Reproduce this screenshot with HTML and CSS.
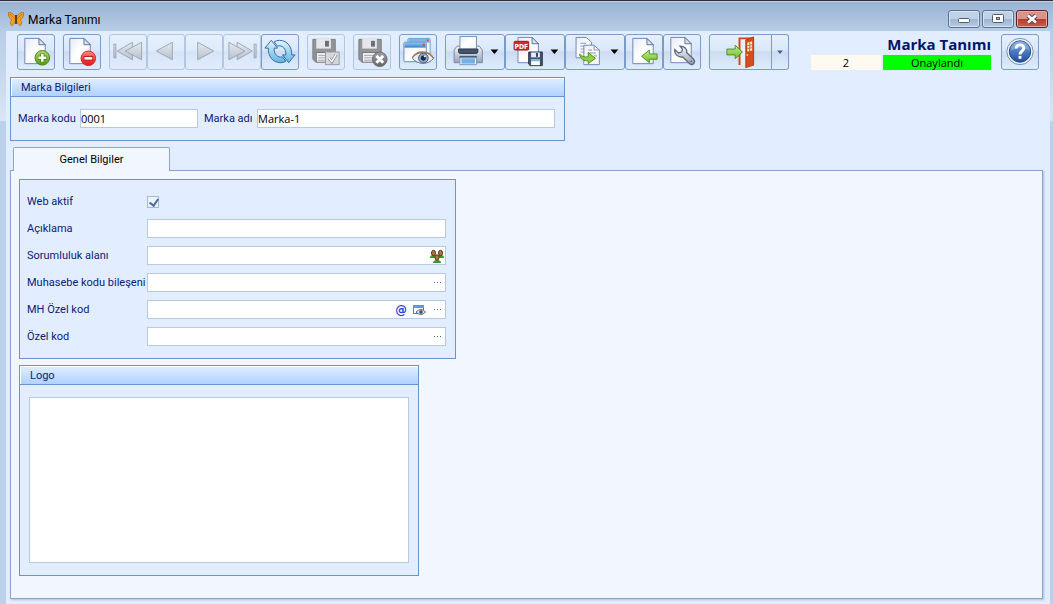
FILE: index.html
```html
<!DOCTYPE html>
<html lang="tr">
<head>
<meta charset="utf-8">
<title>Marka Tanımı</title>
<link rel="stylesheet" href="styles.css">
</head>
<body>
<svg class="defs" aria-hidden="true">
  <defs>
    <linearGradient id="gPaper" x1="0" y1="0" x2="1" y2="1"><stop offset="0" stop-color="#e6ebf7"/><stop offset=".5" stop-color="#fff"/><stop offset="1" stop-color="#eef1fa"/></linearGradient>
    <linearGradient id="gGreen" x1="0" y1="0" x2="0" y2="1"><stop offset="0" stop-color="#b5dc6a"/><stop offset="1" stop-color="#4f9a14"/></linearGradient>
    <linearGradient id="gArrow" x1="0" y1="0" x2="0" y2="1"><stop offset="0" stop-color="#c4ea8a"/><stop offset="1" stop-color="#6cc02c"/></linearGradient>
    <linearGradient id="gRed" x1="0" y1="0" x2="0" y2="1"><stop offset="0" stop-color="#ff8a80"/><stop offset="1" stop-color="#dc1414"/></linearGradient>
    <linearGradient id="gNav" x1="0" y1="0" x2="0" y2="1"><stop offset="0" stop-color="#e6eaf0"/><stop offset="1" stop-color="#b9c0cb"/></linearGradient>
    <linearGradient id="gCyan" x1="0" y1="0" x2="0" y2="1"><stop offset="0" stop-color="#e2f4fd"/><stop offset="1" stop-color="#63b3e2"/></linearGradient>
    <linearGradient id="gWin" x1="0" y1="0" x2="0" y2="1"><stop offset="0" stop-color="#8cc4f2"/><stop offset="1" stop-color="#3a82c8"/></linearGradient>
    <linearGradient id="gDark" x1="0" y1="0" x2="0" y2="1"><stop offset="0" stop-color="#9ea0a4"/><stop offset="1" stop-color="#626468"/></linearGradient>
    <linearGradient id="gSteel" x1="0" y1="0" x2="0" y2="1"><stop offset="0" stop-color="#f4f6fa"/><stop offset="1" stop-color="#98a2b6"/></linearGradient>
    <linearGradient id="gHelp" x1="0" y1="0" x2="0" y2="1"><stop offset="0" stop-color="#7ba6dc"/><stop offset="1" stop-color="#1f4f9c"/></linearGradient>
    <g id="page"><path d="M.5.5H15L21.5 7V26.500H.5Z" fill="url(#gPaper)" stroke="#6f84b4"/><path d="M15 .5V7H21.500Z" fill="#dbe3f3" stroke="#5a70a4"/></g>
    <g id="floppy"><path d="M.5 .5H23.500V23.500H3L.5 21Z" fill="#929498" stroke="#7a7c80"/><rect x="4" y="0" width="15" height="10" fill="#e4e7ec"/><rect x="13" y="2" width="4" height="6" fill="#6c6e72"/><rect x="4" y="14" width="16" height="10" fill="#eceef1" stroke="#74767a"/><path d="M6 17H18M6 19.500H18M6 22H18" stroke="#a6a8ac"/></g>
  </defs>
</svg>
<div class="window">
  <header class="titlebar">
    <svg class="app-icon" width="16" height="16" viewBox="0 0 16 16" aria-hidden="true"><path d="M7.500 6C5 2 2 1 .5 1.500 0 5 1.500 8 4 8.500 2 10 2 13 3.500 14.500 6 14 7 11 7.800 9 9 11 10 14 12.500 14.500 14 13 14 10 12 8.500 14.500 8 16 5 15.500 1.500 13 1 10 3 8.500 6Z" fill="#f5a31c" stroke="#a8560c" stroke-width=".6"/><path d="M1.500 2.500 7 8M14.500 2.500 9 8" fill="none" stroke="#c26d0e" stroke-width=".8"/><path d="M8 4V13" stroke="#3c2410" stroke-width="1.500"/></svg>
    <span class="caption">Marka Tanımı</span>
    <div class="winbtns">
      <button class="winbtn" aria-label="Simge durumuna küçült"><svg width="30" height="16" viewBox="0 0 30 16"><rect x="9.500" y="7.500" width="11" height="4" rx="1" fill="#fff" stroke="#525c6c"/></svg></button>
      <button class="winbtn" aria-label="Ekranı kapla"><svg width="30" height="16" viewBox="0 0 30 16"><rect x="9.500" y="3.500" width="11" height="8" rx="1" fill="#fff" stroke="#525c6c"/><rect x="13.500" y="6.500" width="3" height="2" fill="#a5bbd6" stroke="#525c6c"/></svg></button>
      <button class="winbtn close" aria-label="Kapat"><svg width="30" height="16" viewBox="0 0 30 16"><path d="M11 4.500 19 11.500M19 4.500 11 11.500" stroke="#4c4350" stroke-width="4.500"/><path d="M11 4.500 19 11.500M19 4.500 11 11.500" stroke="#fff" stroke-width="2.600"/></svg></button>
    </div>
  </header>
  <main class="client">
    <div class="topbar">
      <div class="toolbar">
        <button class="tool" aria-label="Yeni"><svg viewBox="0 0 36 35"><use href="#page" x="6" y="3"/><circle cx="24.500" cy="23.500" r="7.500" fill="url(#gGreen)" stroke="#4a8014"/><path d="M24.500 19V28M20 23.500H29" stroke="#4d851a" stroke-width="4.500"/><path d="M24.500 19.500V27.500M20.500 23.500H28.500" stroke="#fff" stroke-width="2.600"/></svg></button>
        <button class="tool" aria-label="Sil"><svg viewBox="0 0 36 35"><use href="#page" x="5" y="3"/><circle cx="24.500" cy="24" r="7.500" fill="url(#gRed)" stroke="#d22"/><path d="M19.500 24H29.500" stroke="#c22020" stroke-width="5"/><path d="M20.500 24H28.500" stroke="#fff" stroke-width="2.600"/></svg></button>
        <div class="cluster">
          <button class="tool dim" disabled aria-label="İlk kayıt"><svg viewBox="0 0 36 35"><g fill="url(#gNav)" stroke="#9ba5b4"><rect x="3.500" y="9.500" width="2" height="14"/><path d="M7 16.500 22.500 7.500V25.500Z"/><path d="M15 16.500 32 7.500V25.500Z"/></g></svg></button>
          <button class="tool dim" disabled aria-label="Önceki kayıt"><svg viewBox="0 0 36 35"><path d="M8 16.500 24.500 7.500V25.500Z" fill="url(#gNav)" stroke="#9ba5b4"/></svg></button>
          <button class="tool dim" disabled aria-label="Sonraki kayıt"><svg viewBox="0 0 36 35"><path d="M28 16.500 11.500 7.500V25.500Z" fill="url(#gNav)" stroke="#9ba5b4"/></svg></button>
          <button class="tool dim" disabled aria-label="Son kayıt"><svg viewBox="0 0 36 35"><g fill="url(#gNav)" stroke="#9ba5b4"><path d="M28.500 16.500 13 7.500V25.500Z"/><path d="M21 16.500 4.500 7.500V25.500Z"/><rect x="30.500" y="9.500" width="2" height="14"/></g></svg></button>
          <button class="tool" aria-label="Yenile"><svg viewBox="0 0 36 35"><g fill="url(#gCyan)" stroke="#2f6ca4" stroke-linejoin="round"><path d="M9 5.500 2.500 13.500H6C5.500 21 10 28.500 18.500 28.500 20.500 28.500 22.500 28 24 27L20.500 22.500C15.500 24 11.500 19.500 12 13.500H15.500Z"/><path d="M27 28.500 33.500 20.500H30C30.500 13 26 5.500 17.500 5.500 15.500 5.500 13.500 6 12 7L15.500 11.500C20.500 10 24.500 14.500 24 20.500H20.500Z"/></g></svg></button>
        </div>
        <button class="tool dim" disabled aria-label="Kaydet"><svg viewBox="0 0 36 35"><use href="#floppy" x="4" y="4"/><rect x="17.500" y="17.500" width="14" height="13" fill="#d4d7dc" stroke="#96999f"/><path d="M21 24 24 27.500 28.500 20" fill="none" stroke="#8a8e95" stroke-width="3"/><path d="M21 24 24 27.500 28.500 20" fill="none" stroke="#fff" stroke-width="1.400"/></svg></button>
        <button class="tool dim" disabled aria-label="Vazgeç"><svg viewBox="0 0 36 35"><use href="#floppy" x="4" y="4"/><circle cx="26" cy="25" r="7.500" fill="url(#gDark)" stroke="#6a6c70"/><path d="M22.500 21.500 29.500 28.500M29.500 21.500 22.500 28.500" stroke="#fff" stroke-width="3"/></svg></button>
        <button class="tool" aria-label="Önizleme"><svg viewBox="0 0 36 35"><rect x="7.500" y="3.500" width="23" height="19" rx="1" fill="#f2f6fd" stroke="#6f9bd0"/><path d="M8 4H30V8H8Z" fill="#7db6ea"/><rect x="27" y="4.500" width="2" height="2" fill="#f04030"/><rect x="3.500" y="7.500" width="23" height="20" rx="1" fill="url(#gPaper)" stroke="#5f88c4"/><path d="M4 8H26V13H4Z" fill="url(#gWin)"/><rect x="23" y="9" width="2" height="2" fill="#f04030"/><path d="M12 23.500C16 17 30 16 34 24 29 31 17 31 12 23.500Z" fill="#e9eef6" stroke="#6c6f7c"/><path d="M12.500 23C17 15.500 29 15.500 34 24" fill="none" stroke="#a37950" stroke-width="1.500"/><circle cx="23.500" cy="23.800" r="5" fill="#8ba6c8" stroke="#4c6186"/><circle cx="23.500" cy="23.800" r="2.600" fill="#1b2944"/><circle cx="25" cy="22" r="1" fill="#fff"/></svg></button>
        <div class="cluster">
          <button class="tool drop" aria-label="Yazdır"><svg viewBox="0 0 58 35"><path d="M7.500 15.500 10.500 11.500H33.500L36.500 15.500V28.500H7.500Z" fill="url(#gSteel)" stroke="#7c88a0"/><rect x="13.500" y="1.500" width="17" height="13" fill="url(#gPaper)" stroke="#7c8eb0"/><path d="M12 14.500H32V17Q32 19 30 19H14Q12 19 12 17Z" fill="#46536b" stroke="#2f3a50"/><path d="M13 22.500H31" stroke="#4c5a76" stroke-width="2"/><path d="M13.500 23.500H30.500V30.500H13.500Z" fill="#fff" stroke="#7e94bc"/><path d="M15 24H29V29.500H15Z" fill="#74b2e6"/><path d="M45 15H53L49 19.500Z"/></svg></button>
          <button class="tool drop" aria-label="PDF olarak kaydet"><svg viewBox="0 0 58 35"><use href="#page" x="11" y="2"/><rect x="7.500" y="6.500" width="15" height="9" rx="1" fill="#d8282c" stroke="#a31518"/><text x="15" y="14" class="pdf" text-anchor="middle">PDF</text><path d="M22.500 17.500H36.500V31.500H24L22.500 30Z" fill="#44526e" stroke="#26324a"/><rect x="25" y="18" width="9" height="5" fill="#e6edf8"/><rect x="30" y="18.500" width="2" height="4" fill="#34405a"/><rect x="25" y="25" width="9" height="6" fill="#fff"/><rect x="25" y="25" width="9" height="2" fill="#6fb6e6"/><path d="M45 15H53L49 19.500Z"/></svg></button>
          <button class="tool drop" aria-label="Kopyala"><svg viewBox="0 0 58 35"><path d="M9.500 2.500H20L25.500 7.500V23.500H9.500Z" fill="url(#gPaper)" stroke="#7386b4"/><path d="M14 8.500H20M14 11.500H22M14 14.500H22M14 17.500H22" fill="none" stroke="#8494b8"/><path d="M17.500 10.500H28L33.500 15.500V30.500H17.500Z" fill="url(#gPaper)" stroke="#7386b4"/><path d="M28 10.500V15.500H33.500M22 15.500H26M22 18.500H30M28 21.500H31" fill="none" stroke="#8494b8"/><path d="M13 19.500C15 22 18 23 22 22.500V18L29.500 24 22 29.500V26.500C18 27 14 25 13 19.500Z" fill="#8ccf48" stroke="#55901c"/><path d="M45 15H53L49 19.500Z"/></svg></button>
          <button class="tool" aria-label="Geri al"><svg viewBox="0 0 36 35"><use href="#page" x="6" y="3"/><path d="M15.500 22 23.500 15.500V19.500H31.500V25H23.500V28.500Z" fill="url(#gArrow)" stroke="#55901c"/></svg></button>
          <button class="tool" aria-label="Ayarlar"><svg viewBox="0 0 36 35"><use href="#page" x="6" y="2"/><path d="M16 11.500C20.500 11.500 23.500 14.500 22.800 18L30 25C32.500 28 29 32 26 29.500L18.500 22.500C14.500 23.500 10 20 10.500 15L14.500 18.500 17.500 17.500 18.500 14.500Z" fill="url(#gSteel)" stroke="#5b6780" stroke-width="1.300"/><circle cx="27.500" cy="27" r="1" fill="#5b6780"/></svg></button>
        </div>
        <div class="cluster">
          <button class="tool door" aria-label="Çıkış"><svg viewBox="0 0 61 35"><path d="M29.500 31V3.500H42V31" fill="#e9eff9" stroke="#d0451c" stroke-width="2"/><path d="M36 5 44 2V31L36 33.500Z" fill="#d84b1c" stroke="#b03a14"/><path d="M37.500 8 42.500 6.500V16L37.500 17Z" fill="#fff0c0"/><path d="M37.500 11 42.500 10M37.500 14 42.500 13M40 7.500V16.500" stroke="#ac7448" fill="none"/><circle cx="37.500" cy="20.500" r="1" fill="#f5cc62"/><path d="M16.500 14.500H25V10.500L32.500 17.500 25 24.500V20.500H16.500Z" fill="url(#gArrow)" stroke="#4c8f28"/></svg></button>
          <button class="tool thin" aria-label="Çıkış seçenekleri"><svg viewBox="0 0 16 35"><path d="M5 16H11L8 19.500Z" fill="#3c6496"/></svg></button>
        </div>
      </div>
      <div class="status">
        <h1 class="form-title">Marka Tanımı</h1>
        <div class="state"><span class="state-no">2</span><span class="state-ok">Onaylandı</span></div>
      </div>
      <button class="tool" aria-label="Yardım"><svg viewBox="0 0 36 35"><circle cx="18" cy="17" r="13.500" fill="#eef2f9" stroke="#7a8faf"/><circle cx="18" cy="17" r="11" fill="url(#gHelp)" stroke="#1d4788"/><path d="M8 16A10 10 0 0 1 28 16Q18 11 8 16Z" fill="#a9c6ea" opacity=".4"/><path d="M14 14C14 9 22 9 22 13.500 22 16.500 18 16.500 18 20" fill="none" stroke="#fff" stroke-width="3"/><rect x="16.500" y="21.500" width="3" height="3" fill="#fff"/></svg></button>
    </div>

    <section class="group brand">
      <h2 class="group-head">Marka Bilgileri</h2>
      <div class="brand-body">
        <label for="code">Marka kodu</label>
        <input class="box code" id="code" type="text" value="0001">
        <label class="name-label" for="name">Marka adı</label>
        <input class="box name" id="name" type="text" value="Marka-1">
      </div>
    </section>

    <div class="tabs" role="tablist"><button class="tab" role="tab" aria-selected="true" id="tab1" aria-controls="panel1">Genel Bilgiler</button></div>
    <div class="panel" role="tabpanel" id="panel1" aria-labelledby="tab1">
      <section class="group fields">
        <label for="web">Web aktif</label>
        <input class="check" type="checkbox" id="web" checked>
        <label for="desc">Açıklama</label>
        <div class="field"><input id="desc" type="text"></div>
        <label for="resp">Sorumluluk alanı</label>
        <div class="field"><input id="resp" type="text"><button class="pick" aria-label="Sorumluluk alanı seç"><svg width="14" height="14" viewBox="0 0 14 14"><path d="M0 9Q0 6 3 6H5V9ZM9 6H11Q14 6 14 9H9ZM3 14Q3 11 7 11 11 11 11 14Z" fill="#3b9a2c"/><g fill="#b07a45" stroke="#5a3212"><ellipse cx="3.500" cy="4" rx="2" ry="2.700"/><ellipse cx="10.500" cy="4" rx="2" ry="2.700"/><ellipse cx="7" cy="8.500" rx="2" ry="2.700"/></g></svg></button></div>
        <label for="acc">Muhasebe kodu bileşeni</label>
        <div class="field"><input id="acc" type="text"><button class="pick" aria-label="Muhasebe kodu seç"><svg width="14" height="14" viewBox="0 0 14 14"><path d="M4 6.500H5M7 6.500H8M10 6.500H11" stroke="#3f66a0"/></svg></button></div>
        <label for="mh">MH Özel kod</label>
        <div class="field"><input id="mh" type="text"><button class="pick at">@</button><button class="pick" aria-label="Görüntüle"><svg width="14" height="14" viewBox="0 0 14 14"><rect x="1.500" y="2.500" width="10" height="8" fill="#fff" stroke="#4c83bc"/><path d="M1 2H12V5H1Z" fill="#5c9bd6"/><path d="M4 9Q9 4 13.500 9 9 14 4 9Z" fill="#dfe7f2" stroke="#5d6880"/><circle cx="9" cy="9" r="1.700" fill="#33486c"/></svg></button><button class="pick" aria-label="MH özel kod seç"><svg width="14" height="14" viewBox="0 0 14 14"><path d="M4 6.500H5M7 6.500H8M10 6.500H11" stroke="#3f66a0"/></svg></button></div>
        <label for="spec">Özel kod</label>
        <div class="field"><input id="spec" type="text"><button class="pick" aria-label="Özel kod seç"><svg width="14" height="14" viewBox="0 0 14 14"><path d="M4 6.500H5M7 6.500H8M10 6.500H11" stroke="#3f66a0"/></svg></button></div>
      </section>
      <section class="group logo">
        <h2 class="group-head">Logo</h2>
        <div class="logo-box"></div>
      </section>
    </div>
  </main>
</div>
</body>
</html>
```
FILE: styles.css
```css
* { box-sizing: border-box; }
body {
  margin: 0;
  font: 11px/14px Roboto, "Noto Sans", sans-serif;
  color: #0c1a78;
}
button, input { font: inherit; margin: 0; padding: 0; }
h1, h2 { margin: 0; font-size: inherit; font-weight: normal; }
.defs { position: absolute; width: 0; height: 0; }

.window {
  min-height: 100vh;
  display: flex;
  flex-direction: column;
  border-top: 1px solid #2c2c38;
  background: linear-gradient(#9ab4d3 0, #b6cee8 30px, #c0d4ea 60px, #d9e6f4 120px, #bad1e9 120px);
}
.titlebar {
  height: 30px;
  display: flex;
  align-items: flex-start;
  padding: 9px 5px 0 8px;
  gap: 4px;
  background: linear-gradient(#eaf2fb 0, #9ab3d2 1px, #b5cde7);
}
.app-icon { margin-top: 1px; }
.caption { flex: 1; font-size: 12px; line-height: 20px; color: #000; }
.winbtns { display: flex; gap: 2px; }
.winbtn {
  width: 32px;
  height: 18px;
  border: 1px solid #5c7090;
  border-radius: 3px;
  box-shadow: inset 0 0 0 1px #d6e3f2;
  background: linear-gradient(#bfd1e6 50%, #9cb4d0 50%, #b5cce5);
}
.winbtn svg { display: block; }
.winbtn.close {
  border-color: #5c2028;
  box-shadow: inset 0 0 0 1px #e4aaa4;
  background: linear-gradient(#d9948a 50%, #b83a28 50%, #c8604c);
}

.client {
  flex: 1;
  display: flex;
  flex-direction: column;
  margin: 0 3px 0 6px;
  padding: 3px 7px 5px 4px;
  background: #e2eeff;
}
.topbar { display: flex; align-items: flex-start; padding: 0 4px 0 7px; margin-bottom: 7px; }
.toolbar { display: flex; gap: 8px; }
.cluster { display: flex; }
.tool {
  width: 38px;
  height: 36px;
  flex: none;
  border: 1px solid #7a9cc8;
  border-radius: 3px;
  background: linear-gradient(#e6f0fd 0, #d9e7f9 45%, #cbdcf2 50%, #dfecfc);
}
.tool svg { display: block; width: 100%; height: 100%; }
.tool.dim { border-color: #b2c6e2; background: linear-gradient(#e6f0fd 0, #dfebfb 45%, #d5e4f7 50%, #e1edfd); }
.tool.drop { width: 60px; }
.tool.door { width: 63px; border-radius: 3px 0 0 3px; }
.tool.thin { width: 17px; border-left: 0; border-radius: 0 3px 3px 0; }
.pdf { font: bold 7px "DejaVu Sans Condensed", sans-serif; fill: #fff; }

.status { flex: 1; padding-right: 10px; text-align: right; font-family: "Open Sans", "Noto Sans", sans-serif; }
.form-title { font-weight: bold; font-size: 15px; line-height: 20px; color: #00146e; }
.state { display: flex; justify-content: flex-end; gap: 2px; color: #000; line-height: 15px; text-align: center; margin-top: 1px; }
.state-no { width: 70px; background: #fffaf0; }
.state-ok { width: 108px; background: #0f0; }

.group { border: 1px solid #6a94d0; background: #e2eeff; }
.group-head {
  height: 19px;
  padding: 0 10px;
  line-height: 19px;
  border: solid #6a94d0;
  border-width: 0 0 1px;
  box-shadow: inset 1px 1px 0 #fff;
  background: linear-gradient(#e2eeff, #b0d2ff);
}
.brand { width: 555px; max-width: 100%; }
.brand-body { display: flex; align-items: center; padding: 12px 9px 12px 7px; }
.box, .field { height: 19px; border: 1px solid #b6c8e2; background: #fff; }
.box { color: #000; font-family: "Open Sans", "Noto Sans", sans-serif; }
.brand-body label { width: 62px; white-space: nowrap; flex: none; }
.brand-body .name-label { width: 53px; }
.code { width: 118px; margin-right: 6px; }
.name { flex: 1; min-width: 0; }

.tabs { display: flex; padding-left: 3px; margin-top: 6px; }
.tab {
  width: 157px;
  height: 24px;
  margin-bottom: -1px;
  position: relative;
  border: 1px solid #8ca4cc;
  border-bottom: 0;
  border-radius: 2px 2px 0 0;
  background: #f2f7ff;
  color: #000;
}
.panel {
  flex: 1;
  padding: 8px;
  border: 1px solid #8ca4cc;
  box-shadow: 1px 1px 2px #a9bde0;
  background: #f2f7ff;
}
.fields {
  width: 437px;
  max-width: 100%;
  display: grid;
  grid-template-columns: 120px 1fr;
  grid-auto-rows: 19px;
  row-gap: 8px;
  align-items: center;
  padding: 12px 9px 12px 7px;
}
.fields label { white-space: nowrap; }
.check {
  appearance: none;
  width: 12px;
  height: 12px;
  border: 1px solid #a3b9d8;
  background: #eef3fa;
}
.check:checked::before {
  content: "";
  display: block;
  width: 4px;
  height: 7px;
  margin: 0 0 0 3px;
  border: solid #4c6c98;
  border-width: 0 2px 2px 0;
  transform: rotate(35deg);
}
.field { display: flex; align-items: center; padding-right: 1px; gap: 4px; }
.field input { flex: 1; min-width: 0; border: 0; background: none; height: 100%; outline: 0; }
.pick { width: 14px; height: 14px; border: 0; background: none; flex: none; }
.pick svg { display: block; }
.at { font: bold 13px/14px "DejaVu Sans Condensed", sans-serif; color: #1f3fe0; }

.logo { width: 400px; max-width: 100%; margin-top: 6px; }
.logo-box { height: 166px; margin: 12px 9px; border: 1px solid #b6c8e2; background: #fff; }
```
